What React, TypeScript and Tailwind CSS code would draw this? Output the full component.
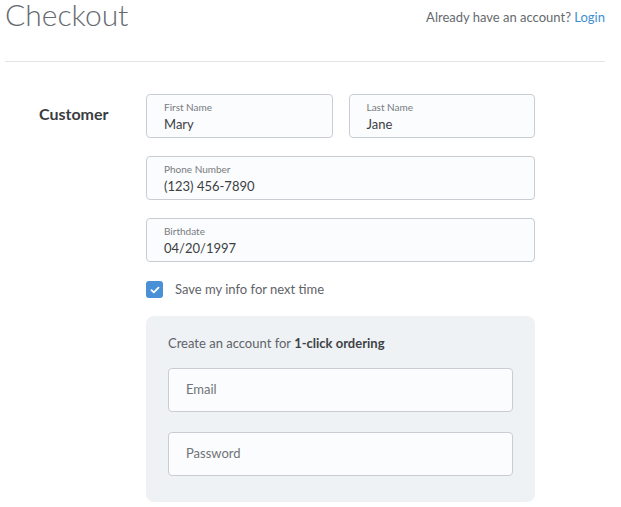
const font = "font-['Lato','Open_Sans',sans-serif]";

function Field({ label, value, className = "" }: { label: string; value: string; className?: string }) {
  return (
    <div
      className={`flex h-[44px] flex-col justify-center rounded-[4px] border border-[#c9cdd3] bg-[#fbfcfd] px-[17px] ${className}`}
    >
      <span className="text-[10px] leading-[12px] text-[#777b80]">{label}</span>
      <span className="mt-[3px] text-[13px] leading-[16px] text-[#3b3f44]">{value}</span>
    </div>
  );
}

function Plain({ placeholder }: { placeholder: string }) {
  return (
    <div className="flex h-[44px] items-center rounded-[4px] border border-[#c9cdd3] bg-[#fbfcfd] px-[17px] text-[13px] text-[#6f7378]">
      {placeholder}
    </div>
  );
}

export default function App() {
  return (
    <div className={`h-[507px] w-[621px] overflow-hidden bg-white ${font}`}>
      <header className="ml-[5px] mr-[16px] flex h-[62px] items-start justify-between border-b border-[#e4e4e4]">
        <h1 className="text-[30px] font-light leading-[28px] text-[#666a6e]">Checkout</h1>
        <p className="mt-[8px] text-[13px] text-[#666a6e]">
          Already have an account? <a className="text-[#3d8fd1]">Login</a>
        </p>
      </header>

      <main className="mt-[32px] flex">
        <div className="w-[146px] pl-[39px] pt-[8px] text-[16px] font-bold text-[#3a3d40]">Customer</div>
        <div className="flex w-[389px] flex-col">
          <div className="flex gap-[16px]">
            <Field label="First Name" value="Mary" className="flex-1" />
            <Field label="Last Name" value="Jane" className="flex-1" />
          </div>
          <Field label="Phone Number" value="(123) 456-7890" className="mt-[18px]" />
          <Field label="Birthdate" value="04/20/1997" className="mt-[18px]" />

          <label className="mt-[18px] flex items-center gap-[12px]">
            <span className="flex h-[17px] w-[17px] items-center justify-center rounded-[3px] bg-[#4a90d6]">
              <svg width="10" height="8" viewBox="0 0 10 8" fill="none">
                <path d="M1.5 4.2 L3.8 6.3 L8.5 1.7" stroke="white" strokeWidth="1.8" strokeLinecap="round" strokeLinejoin="round" />
              </svg>
            </span>
            <span className="text-[13px] text-[#5f6368]">Save my info for next time</span>
          </label>

          <section className="mt-[16px] flex h-[186px] flex-col rounded-[8px] bg-[#eef2f5] px-[22px] pt-[19px]">
            <p className="text-[13px] leading-[16px] text-[#5f6368]">
              Create an account for <b className="font-bold text-[#3f4246]">1-click ordering</b>
            </p>
            <div className="mt-[17px] flex flex-col gap-[20px]">
              <Plain placeholder="Email" />
              <Plain placeholder="Password" />
            </div>
          </section>
        </div>
      </main>
    </div>
  );
}
